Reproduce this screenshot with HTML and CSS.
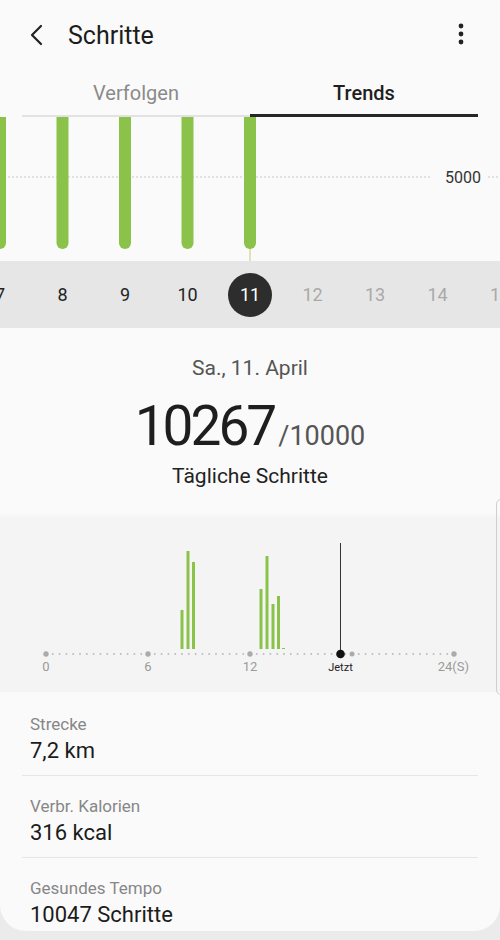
FILE: index.html
```html
<!DOCTYPE html>
<html lang="de">
<head>
<meta charset="utf-8">
<title>Schritte</title>
<link rel="stylesheet" href="styles.css">
</head>
<body>
<div class="page">
  <header class="appbar">
    <svg class="back" width="20" height="24" viewBox="0 0 20 24"><path d="M13 3 L4 12 L13 21" fill="none" stroke="#222" stroke-width="2.2" stroke-linecap="round" stroke-linejoin="round"/></svg>
    <h1 class="title">Schritte</h1>
    <svg class="kebab" width="8" height="24" viewBox="0 0 8 24"><circle cx="4" cy="4" r="2.4" fill="#222"/><circle cx="4" cy="12" r="2.4" fill="#222"/><circle cx="4" cy="20" r="2.4" fill="#222"/></svg>
  </header>
  <nav class="tabs">
    <div class="tab">Verfolgen</div>
    <div class="tab active">Trends</div>
  </nav>
  <div class="trend">
    <svg width="500" height="144" viewBox="0 0 500 144">
      <line x1="0" y1="60" x2="432" y2="60" stroke="#c9c9c9" stroke-width="1" stroke-dasharray="2 2"/>
      <line x1="488" y1="60" x2="500" y2="60" stroke="#c9c9c9" stroke-width="1" stroke-dasharray="2 2"/>
      <text x="481" y="66" text-anchor="end" class="axislabel">5000</text>
      <line x1="250" y1="128" x2="250" y2="144" stroke="#d9cd8e" stroke-width="1.2"/>
      <rect x="-6" y="-10" width="12" height="142" rx="6" fill="#8bc24a"/>
      <rect x="56.5" y="-10" width="12" height="142" rx="6" fill="#8bc24a"/>
      <rect x="119" y="-10" width="12" height="142" rx="6" fill="#8bc24a"/>
      <rect x="181.5" y="-10" width="12" height="142" rx="6" fill="#8bc24a"/>
      <rect x="244" y="-10" width="12" height="142" rx="6" fill="#8bc24a"/>
    </svg>
  </div>
  <div class="days">
    <div class="day past">7</div>
    <div class="day past">8</div>
    <div class="day past">9</div>
    <div class="day past">10</div>
    <div class="day current"><span class="dot">11</span></div>
    <div class="day future">12</div>
    <div class="day future">13</div>
    <div class="day future">14</div>
    <div class="day future">15</div>
  </div>
  <main class="card">
    <section class="summary">
      <div class="date">Sa., 11. April</div>
      <div class="count"><span class="big">10267</span><span class="goal">/10000</span></div>
      <div class="caption">Tägliche Schritte</div>
    </section>
    <section class="hourly">
      <svg width="492" height="173" viewBox="0 0 492 173">
        <rect x="0" y="0" width="492" height="173" fill="#f4f4f4"/>
        <line x1="46" y1="135" x2="454" y2="135" stroke="#bdbdbd" stroke-width="2" stroke-linecap="round" stroke-dasharray="0 6.8"/>
        <circle cx="46" cy="135" r="2.7" fill="#ababab"/>
        <circle cx="148" cy="135" r="2.7" fill="#ababab"/>
        <circle cx="250" cy="135" r="2.7" fill="#ababab"/>
        <circle cx="352" cy="135" r="2.5" fill="#ababab"/>
        <circle cx="454" cy="135" r="2.7" fill="#ababab"/>
        <line x1="340.5" y1="24" x2="340.5" y2="135" stroke="#333" stroke-width="1"/>
        <circle cx="340.5" cy="135" r="4.3" fill="#111"/>
        <g fill="#8bc24a">
          <rect x="180.5" y="91" width="3" height="39"/>
          <rect x="186.5" y="32" width="3" height="98"/>
          <rect x="192" y="43" width="3" height="87"/>
          <rect x="259.5" y="70" width="3" height="60"/>
          <rect x="265.5" y="37" width="3" height="93"/>
          <rect x="271.5" y="85" width="3" height="45"/>
          <rect x="277" y="77" width="3" height="53"/>
          <rect x="282" y="129" width="3" height="1"/>
        </g>
        <text x="46" y="152" text-anchor="middle" class="hlabel">0</text>
        <text x="148" y="152" text-anchor="middle" class="hlabel">6</text>
        <text x="250" y="152" text-anchor="middle" class="hlabel">12</text>
        <text x="340.5" y="152" text-anchor="middle" class="nowlabel">Jetzt</text>
        <text x="469" y="152" text-anchor="end" class="hlabel">24(S)</text>
      </svg>
      <div class="scrollhint"></div>
    </section>
    <section class="list">
      <div class="item">
        <div class="label">Strecke</div>
        <div class="value">7,2 km</div>
      </div>
      <div class="item">
        <div class="label">Verbr. Kalorien</div>
        <div class="value">316 kcal</div>
      </div>
      <div class="item last">
        <div class="label">Gesundes Tempo</div>
        <div class="value">10047 Schritte</div>
      </div>
    </section>
  </main>
</div>
</body>
</html>
```
FILE: styles.css
```css
* { box-sizing: border-box; }
html, body { margin: 0; padding: 0; }
body {
  width: 500px;
  height: 940px;
  overflow: hidden;
  background: #ebebeb;
  font-family: Roboto, "Noto Sans", "Liberation Sans", sans-serif;
  color: #222;
}
.page {
  width: 500px;
  background: #fafafa;
  border-radius: 0 0 26px 26px;
  overflow: hidden;
}
.appbar {
  height: 70px;
  display: flex;
  align-items: center;
  padding: 0 0 0 28px;
}
.back { margin-top: -1px; }
.title {
  margin: 0 0 0 20px;
  font-size: 25px;
  font-weight: 400;
  color: #1c1c1c;
  flex: 1;
}
.kebab { margin-right: 35px; margin-top: -2px; }
.tabs {
  display: flex;
  margin: 0 22px;
  height: 47px;
}
.tab {
  flex: 1;
  text-align: center;
  font-size: 20px;
  color: #8a8a8a;
  padding-top: 11px;
  border-bottom: 2px solid #e2e2e2;
}
.tab.active {
  color: #1f1f1f;
  font-weight: 500;
  border-bottom: 3px solid #262626;
}
.trend {
  height: 144px;
  position: relative;
}
.trend svg { display: block; }
.axislabel {
  font-family: Roboto, sans-serif;
  font-size: 16px;
  fill: #333;
}
.days {
  height: 67px;
  background: #e6e6e6;
  display: flex;
  align-items: center;
  margin-left: -31.25px;
  position: relative;
}
.day {
  width: 62.5px;
  flex: none;
  text-align: center;
  font-size: 18px;
  line-height: 44px;
  height: 44px;
  display: flex;
  justify-content: center;
}
.day.past { color: #232323; }
.day.future { color: #a9a9a9; }
.dot {
  width: 44px;
  height: 44px;
  border-radius: 50%;
  background: #2d2d2d;
  color: #fff;
  display: block;
  text-align: center;
}
.day.current { position: relative; }
.day.current::after {
  content: "";
  position: absolute;
  left: 50%;
  bottom: -23px;
  margin-left: -8px;
  border-left: 8px solid transparent;
  border-right: 8px solid transparent;
  border-bottom: 7px solid #fafafa;
}
.card { display: block; }
.summary {
  padding-top: 27px;
  height: 185px;
  text-align: center;
}
.date {
  font-size: 21px;
  line-height: 26px;
  color: #555;
}
.count {
  margin-top: 15px;
  line-height: 60px;
  height: 60px;
}
.big {
  font-size: 55px;
  color: #1e1e1e;
  letter-spacing: -3px;
}
.goal {
  font-size: 27px;
  color: #555;
  margin-left: 4px;
}
.caption {
  margin-top: 7px;
  font-size: 21px;
  line-height: 26px;
  color: #222;
}
.hourly {
  position: relative;
  height: 179px;
  padding-top: 6px;
  background: linear-gradient(#fafafa, #f4f4f4 6px);
}
.hourly svg { display: block; }
.hlabel {
  font-family: Roboto, sans-serif;
  font-size: 13px;
  fill: #9a9a9a;
}
.nowlabel {
  font-family: Roboto, sans-serif;
  font-size: 11px;
  fill: #222;
}
.scrollhint {
  position: absolute;
  right: -6px;
  top: -14px;
  width: 10px;
  height: 196px;
  border: 1px solid #cfcfcf;
  border-radius: 5px;
}
.list {
  margin: 0 22px;
  padding-top: 2px;
}
.item {
  padding: 20px 0 10px 8px;
  border-bottom: 1.5px solid #e6e6e6;
}
.item.last {
  border-bottom: none;
  padding-bottom: 2px;
}
.label {
  font-size: 17px;
  line-height: 21px;
  color: #878787;
}
.value {
  margin-top: 2px;
  font-size: 22px;
  line-height: 28px;
  color: #1c1c1c;
}
```
